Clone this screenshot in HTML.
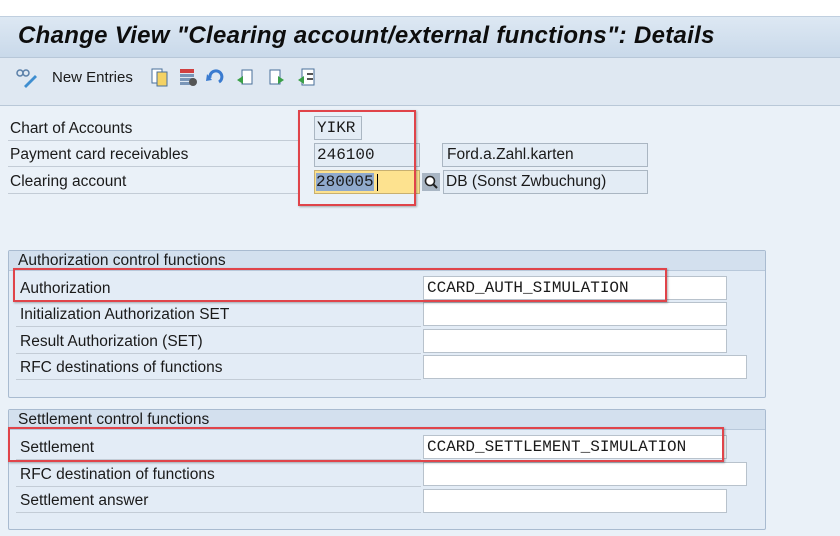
<!DOCTYPE html>
<html><head><meta charset="utf-8"><style>
*{margin:0;padding:0;box-sizing:border-box}
body{width:840px;height:536px;position:relative;overflow:hidden;background:#eaf1f8;font-family:"Liberation Sans",sans-serif;font-size:15.5px;color:#1a1a1a}
.a{position:absolute}
.title{left:0;top:16px;width:840px;height:42px;background:linear-gradient(#dde8f3,#c9d9ea);border-top:1px solid #c0cfdf;border-bottom:1px solid #b7c7d8}
.title span{position:absolute;left:18px;top:5px;font-size:24px;font-weight:bold;font-style:italic;color:#0d0d0d;letter-spacing:0.3px}
.tb{left:0;top:58px;width:840px;height:48px;background:#dfe8f2;border-bottom:1px solid #b9c8d8}
.lbl{left:10px;font-size:15.5px}
.line{height:1px;background:#c3ccd6}
.fld{background:#e3ecf5;border:1px solid #aab6c2;font-family:"Liberation Mono",monospace;font-size:16px;padding:2px 2px;height:24px;line-height:18px}
.in{background:#fff;border:1px solid #b8c2cc;font-family:"Liberation Mono",monospace;font-size:16px;padding:2px 3px;height:24px;line-height:18px}
.grp{border:1px solid #a9bbd0;background:#e3ecf6;border-radius:2px}
.gh{background:#d3e0ee;height:20px;padding:1px 9px;font-size:15.5px;border-bottom:1px solid #b8c8da}
.red{border:2px solid #e0444a;box-shadow:1px 1px 2px rgba(0,0,0,.3)}
</style></head><body>
<div class="a" style="left:0;top:0;width:840px;height:16px;background:#fff"></div>
<div class="a title"><span>Change View "Clearing account/external functions": Details</span></div>
<div class="a tb">
<svg class="a" style="left:15px;top:10px" width="24" height="22" viewBox="0 0 24 22"><circle cx="5" cy="5" r="3" fill="none" stroke="#5a7fa8" stroke-width="1.5"/><circle cx="11" cy="5" r="3" fill="none" stroke="#5a7fa8" stroke-width="1.5"/><path d="M9 18 L20 7 L22 9 L11 20 Z" fill="#3f8ed0"/></svg>
<div class="a" style="left:52px;top:11px;font-size:15px">New Entries</div>
<svg class="a" style="left:150px;top:8px" width="180" height="26" viewBox="0 0 180 26">
<rect x="2" y="3" width="10" height="14" fill="#fff" stroke="#4a6f9a"/><rect x="7" y="6" width="10" height="14" fill="#f4d264" stroke="#4a6f9a"/>
<rect x="30" y="3" width="14" height="4" fill="#d04040"/><rect x="30" y="8" width="14" height="3" fill="#7a96b8"/><rect x="30" y="12" width="14" height="3" fill="#7a96b8"/><rect x="30" y="16" width="10" height="3" fill="#7a96b8"/><circle cx="43" cy="16" r="4" fill="#555"/>
<path d="M60 12 A6 6 0 1 1 69 16" fill="none" stroke="#3a7bd0" stroke-width="3"/><path d="M57 8 L62 14 L56 15Z" fill="#3a7bd0"/>
<rect x="92" y="4" width="10" height="14" fill="#fff" stroke="#4a6f9a"/><path d="M87 14 L93 10 L93 18Z" fill="#3aa048"/>
<rect x="120" y="4" width="10" height="14" fill="#fff" stroke="#4a6f9a"/><path d="M134 14 L128 10 L128 18Z" fill="#3aa048"/>
<rect x="152" y="3" width="12" height="16" fill="#fff" stroke="#4a6f9a"/><path d="M148 14 L154 10 L154 18Z" fill="#3aa048"/><rect x="157" y="7" width="6" height="2" fill="#555"/><rect x="157" y="12" width="6" height="2" fill="#555"/>
</svg>
</div>

<div class="a lbl" style="top:120px">Chart of Accounts</div>
<div class="a line" style="left:8px;top:140px;width:292px"></div>
<div class="a lbl" style="top:146px">Payment card receivables</div>
<div class="a line" style="left:8px;top:166px;width:292px"></div>
<div class="a lbl" style="top:173px">Clearing account</div>
<div class="a line" style="left:8px;top:193px;width:292px"></div>

<div class="a fld" style="left:314px;top:116px;width:48px">YIKR</div>
<div class="a fld" style="left:314px;top:143px;width:106px">246100</div>
<div class="a" style="left:314px;top:170px;width:106px;height:24px;background:#fde28f;border:1px solid #c8b070"><span style="background:#8fa9cc;font-family:'Liberation Mono',monospace;font-size:16px;position:absolute;left:1px;top:2px;line-height:18px">280005</span><span style="position:absolute;left:62px;top:3px;width:1px;height:17px;background:#000"></span></div>
<div class="a" style="left:422px;top:173px;width:18px;height:18px;background:#a9b6c4"><svg width="18" height="18"><circle cx="8" cy="8" r="4.5" fill="#fff" stroke="#222" stroke-width="1.6"/><path d="M11 11 L15 15" stroke="#222" stroke-width="2"/></svg></div>
<div class="a fld" style="left:442px;top:143px;width:206px;font-family:'Liberation Sans',sans-serif;font-size:15.5px;padding-left:4px">Ford.a.Zahl.karten</div>
<div class="a fld" style="left:443px;top:170px;width:205px;font-family:'Liberation Sans',sans-serif;font-size:15.5px;padding-left:2px">DB (Sonst Zwbuchung)</div>
<div class="a red" style="left:298px;top:110px;width:118px;height:96px"></div>

<div class="a grp" style="left:8px;top:250px;width:758px;height:148px"><div class="gh">Authorization control functions</div></div>
<div class="a lbl" style="left:20px;top:280px">Authorization</div>
<div class="a line" style="left:16px;top:300px;width:405px"></div>
<div class="a lbl" style="left:20px;top:306px">Initialization Authorization SET</div>
<div class="a line" style="left:16px;top:326px;width:405px"></div>
<div class="a lbl" style="left:20px;top:333px">Result Authorization (SET)</div>
<div class="a line" style="left:16px;top:353px;width:405px"></div>
<div class="a lbl" style="left:20px;top:359px">RFC destinations of functions</div>
<div class="a line" style="left:16px;top:379px;width:405px"></div>
<div class="a in" style="left:423px;top:276px;width:304px">CCARD_AUTH_SIMULATION</div>
<div class="a in" style="left:423px;top:302px;width:304px"></div>
<div class="a in" style="left:423px;top:329px;width:304px"></div>
<div class="a in" style="left:423px;top:355px;width:324px"></div>
<div class="a red" style="left:13px;top:268px;width:654px;height:34px"></div>

<div class="a grp" style="left:8px;top:409px;width:758px;height:121px"><div class="gh">Settlement control functions</div></div>
<div class="a lbl" style="left:20px;top:439px">Settlement</div>
<div class="a line" style="left:16px;top:459px;width:405px"></div>
<div class="a lbl" style="left:20px;top:466px">RFC destination of functions</div>
<div class="a line" style="left:16px;top:486px;width:405px"></div>
<div class="a lbl" style="left:20px;top:492px">Settlement answer</div>
<div class="a line" style="left:16px;top:512px;width:405px"></div>
<div class="a in" style="left:423px;top:435px;width:304px">CCARD_SETTLEMENT_SIMULATION</div>
<div class="a in" style="left:423px;top:462px;width:324px"></div>
<div class="a in" style="left:423px;top:489px;width:304px"></div>
<div class="a red" style="left:8px;top:427px;width:716px;height:35px"></div>
</body></html>
